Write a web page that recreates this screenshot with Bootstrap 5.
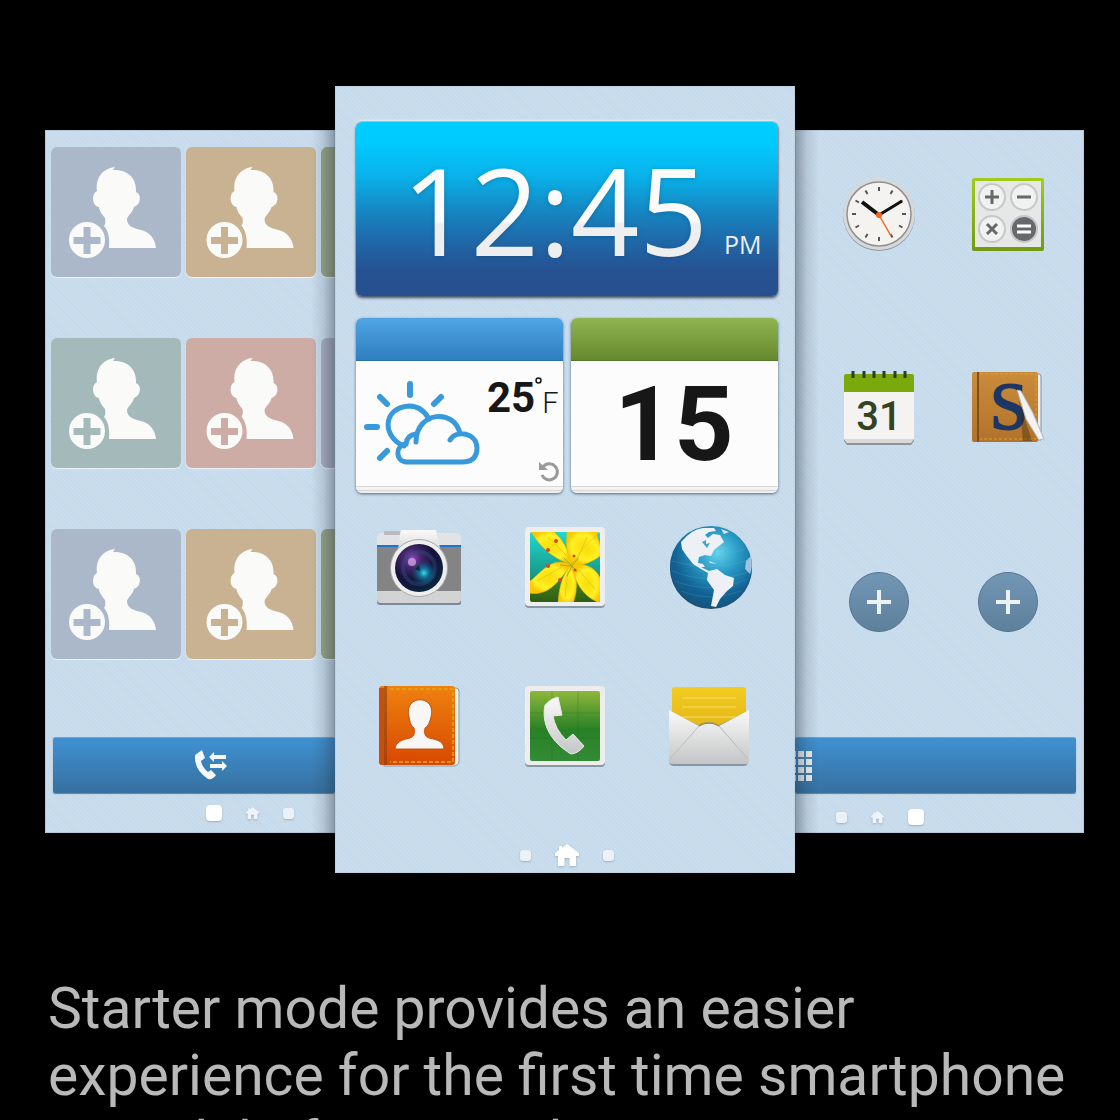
<!DOCTYPE html>
<html lang="en">
<head>
<meta charset="utf-8">
<meta name="viewport" content="width=device-width, initial-scale=1">
<title>Starter mode</title>
<link href="https://cdn.jsdelivr.net/npm/bootstrap@5.3.0/dist/css/bootstrap.min.css" rel="stylesheet">
<style>
body{background:#000;height:100vh;overflow:hidden;font-family:Roboto,"Noto Sans",sans-serif}
button,.app-link{background:none;border:0;padding:0;display:block;line-height:0}
svg{display:block;overflow:visible}
.previews{padding:86px 36px 0 45px}
.pane{background:repeating-linear-gradient(45deg,#c4d9eb 0 1px,#cadded 1px 3px);box-shadow:inset 0 0 0 1px #b5c8d8}
.side{flex:1 1 0;min-width:0;overflow:hidden;height:703px;margin-top:44px;position:relative}
.side::after{content:"";position:absolute;top:0;bottom:0;width:24px;pointer-events:none}
.left-pane::after{right:0;background:linear-gradient(to left,rgba(35,50,65,.4),rgba(35,50,65,.12) 50%,transparent)}
.right-pane::after{left:0;background:linear-gradient(to right,rgba(35,50,65,.4),rgba(35,50,65,.12) 50%,transparent)}
.main-pane{flex:0 0 460px;height:787px;z-index:2;padding:36px 17px 6px 21px;box-shadow:inset 0 0 0 1px #bfd2e2}
.tiles{display:grid;grid-template-columns:repeat(3,130px);gap:61px 5px;padding:17px 0 78px 6px}
.tile{height:130px;border-radius:6px;background:var(--c);box-shadow:0 1px 1px #edf3f7}
.bluebar{height:56px;background:linear-gradient(#4091d2,#36709f);border-top:1px solid #55aae8;border-radius:2px;box-shadow:0 1px 1px #778}
.left-pane .bluebar{padding-left:142px}
.left-pane .pager{padding-left:161px}
.right-pane .pager{padding-left:41px;margin-top:12px}
.clock-card{height:174px;border-radius:6px;background:linear-gradient(#00ceff 0,#00caff 12%,#0ab0e8 32%,#1589c4 50%,#1e6cac 66%,#265292 85%,#264f8d);box-shadow:0 2px 3px #44546a,0 0 0 1px #b4bfc6,0 -2px 2px #e4eff6}
.digits{font:500 120px/140px "Open Sans","Noto Sans",sans-serif;background:linear-gradient(#fbfbfb 58%,#eee 60%);-webkit-background-clip:text;background-clip:text;color:transparent;filter:drop-shadow(0 1px 2px rgba(0,50,90,.3))}
.meridiem{font:25px/32px "Open Sans","Noto Sans",sans-serif;color:#eee;padding-bottom:12px}
.widgets{margin-top:22px}
.widget{height:175px;border-radius:6px;overflow:hidden;background:linear-gradient(#fcfcfc 168px,#d9d9d9 168px 169px,#f3f3f3 169px 172px,#d5d5d5 172px 173px,#efefef 173px);box-shadow:0 1px 3px #53677a;color:#171717}
.widget header{height:43px}
.wx-head{background:linear-gradient(#4fa5e3,#2f7fc0);border-bottom:1px solid #2b6fac}
.day-head{background:linear-gradient(#91b451,#65892d);border-bottom:1px solid #55752a}
.temp{font-size:42px;line-height:42px;font-weight:700}
.unit{font-size:29px;line-height:36px;font-weight:300}
.day{font-size:104px;line-height:128px;font-weight:700}
.apps{display:grid;grid-template-columns:repeat(3,146px);row-gap:59px;margin:24px -14px 0 -10px}
.apps>*{height:100px;display:flex;align-items:center;justify-content:center}
.pager{height:24px}
.knob{width:11px;height:11px;border-radius:3px;background:#eaf1f7;box-shadow:0 1px 2px #9eb0c0}
.knob.active{width:16px;height:16px;border-radius:4px;background:#fff}
.home-ico{fill:#eef4f9;filter:drop-shadow(0 1px 1px #9eb0c0)}
.home-ico.active{fill:#fff}
.right-grid{display:grid;grid-template-columns:129px 129px;row-gap:94px;padding:34px 0 85px 20px}
.right-grid>*{height:100px;display:flex;align-items:center;justify-content:center}
.intro{font-size:57px;line-height:67px;color:#b9b9b9;padding:102px 36px 0 48px}
</style>
<script src="https://cdn.jsdelivr.net/npm/bootstrap@5.3.0/dist/js/bootstrap.bundle.min.js"></script>
</head>
<body>
<svg width="0" height="0" class="position-absolute" aria-hidden="true">
<defs>
<symbol id="contact" viewBox="0 0 130 130">
<path fill="#fafbf9" d="M46 44C44 29 54 21 64 20L62 23C76 22 86 31 85 45C91 47 90 58 83 60C82 65 77 68 76 72C76 79 82 81 90 83C99 85 104 92 105 101H58C59 91 57 83 53 79Q55 76 54 71Q48 64 48 60C41 59 40 47 46 44Z"/>
<circle cx="36" cy="93" r="18" fill="#fafbf9"/><path d="M32.500 80h7v10h10v7h-10v10h-7v-10h-10v-7h10z" fill="var(--c)"/>
</symbol>
<symbol id="house" viewBox="0 0 24 22"><path d="M12 0L24 9V12H21V22H14.500V14H9.500V22H3V12H0V9L4 6V2H7V4Z"/></symbol>
<linearGradient id="silver" x2="0" y2="1"><stop stop-color="#fafafa"/><stop offset="1" stop-color="#c4c5c6"/></linearGradient>
<linearGradient id="slate" x2="0" y2="1"><stop stop-color="#7297b5"/><stop offset="1" stop-color="#5d809b"/></linearGradient>
<radialGradient id="lens" cx=".35" cy=".3" r=".8"><stop stop-color="#9a45bd"/><stop offset=".25" stop-color="#42256a"/><stop offset=".55" stop-color="#15123a"/><stop offset="1" stop-color="#08293f"/></radialGradient>
<radialGradient id="glow"><stop stop-color="#39dbe7"/><stop offset=".35" stop-color="#128bac" stop-opacity=".8"/><stop offset="1" stop-color="#0b5c83" stop-opacity="0"/></radialGradient>
<radialGradient id="sea" cx=".58" cy=".32" r=".7"><stop stop-color="#64d5ec"/><stop offset=".35" stop-color="#2c9dc7"/><stop offset=".75" stop-color="#126295"/><stop offset="1" stop-color="#14547e"/></radialGradient>
<linearGradient id="teal" x2="0" y2="1"><stop stop-color="#20d8d2"/><stop offset=".6" stop-color="#189a88"/><stop offset=".8" stop-color="#3b7418"/><stop offset="1" stop-color="#2d5d15"/></linearGradient>
<radialGradient id="petal"><stop stop-color="#f6dd10"/><stop offset=".4" stop-color="#ffe714"/><stop offset=".7" stop-color="#fff02a"/><stop offset="1" stop-color="#fbc902"/></radialGradient>
<linearGradient id="orange" x2="0" y2="1"><stop stop-color="#ee810f"/><stop offset="1" stop-color="#d84800"/></linearGradient>
<linearGradient id="leaf" x2="0" y2="1"><stop stop-color="#8eb73b"/><stop offset=".55" stop-color="#298126"/><stop offset="1" stop-color="#328b35"/></linearGradient>
<linearGradient id="yellow" x2="0" y2="1"><stop stop-color="#f3cc22"/><stop offset="1" stop-color="#dfaf14"/></linearGradient>
<linearGradient id="tan" x2="0" y2="1"><stop stop-color="#ca8c3b"/><stop offset="1" stop-color="#b2722b"/></linearGradient>
<linearGradient id="lime" x2="0" y2="1"><stop stop-color="#a0cc1c"/><stop offset="1" stop-color="#719a12"/></linearGradient>
<clipPath id="frame"><rect x="5" y="5" width="70" height="70" rx="2"/></clipPath>
</defs>
</svg>

<main>
<div class="previews d-flex align-items-start">

<section class="pane side left-pane" aria-label="Contacts screen">
<div class="tiles">
<button class="tile" style="--c:#abb8ca" aria-label="Add contact"><svg width="130" height="130"><use href="#contact"/></svg></button>
<button class="tile" style="--c:#c8b292" aria-label="Add contact"><svg width="135" height="130"><use href="#contact"/></svg></button>
<button class="tile" style="--c:#97a487" aria-label="Add contact"></button>
<button class="tile" style="--c:#a4b9b9" aria-label="Add contact"><svg width="130" height="130"><use href="#contact"/></svg></button>
<button class="tile" style="--c:#cdaca6" aria-label="Add contact"><svg width="135" height="130"><use href="#contact"/></svg></button>
<button class="tile" style="--c:#a9aec4" aria-label="Add contact"></button>
<button class="tile" style="--c:#abb8ca" aria-label="Add contact"><svg width="130" height="130"><use href="#contact"/></svg></button>
<button class="tile" style="--c:#c8b292" aria-label="Add contact"><svg width="135" height="130"><use href="#contact"/></svg></button>
<button class="tile" style="--c:#97a487" aria-label="Add contact"></button>
</div>
<div class="ps-2"><button class="bluebar d-flex align-items-center w-100" aria-label="Call log"><svg width="34" height="32" viewBox="0 0 34 32" fill="#f5f7f8"><path d="M0 5L7 0L10 8L6 11Q7 17 13 22L16 20L21 25Q18 30 13 29Q-1 20 0 5Z"/><path d="M14 7L19 2V5H31V9H19V12ZM32 16L27 11V14H15V18H27V21Z"/></svg></button></div>
<div class="pager d-flex align-items-center gap-4 mt-2"><span class="knob active"></span><svg class="home-ico" width="13" height="12"><use href="#house"/></svg><span class="knob"></span></div>
</section>

<section class="pane main-pane d-flex flex-column position-relative" aria-label="Home screen">
<div class="clock-card d-flex align-items-end justify-content-end pe-3">
<span class="digits mb-3">12:45</span><span class="meridiem ms-3 mb-4">PM</span>
</div>
<div class="widgets row g-0 gap-2 flex-nowrap">
<div class="col widget">
<header class="wx-head"></header>
<div class="d-flex justify-content-between">
<svg class="mt-3 ms-2 mb-2" width="120" height="96" viewBox="0 0 120 96" fill="none" stroke="#3899db" stroke-width="5" stroke-linecap="round"><path stroke-width="6" d="M46 7V18M16 20L23 27M77 20L70 27M3 50H13M16 81L23 74"/><path d="M40 69C19 61 17 31 45 29Q58 29 65 42"/><path d="M52 65C52 34 91 31 96 57M86 63C92 52 113 56 113 71Q113 85 98 85H43C31 85 31 68 42 67Q43 58 52 57"/></svg>
<div class="d-flex flex-column align-items-end justify-content-between pt-3 pe-1">
<div class="d-flex align-items-start"><span class="temp">25</span><span class="unit d-flex"><svg width="7" height="7" viewBox="0 0 7 7"><circle cx="3.500" cy="3.500" r="2.500" fill="none" stroke="#171717" stroke-width="1.500"/></svg><span class="pt-2">F</span></span></div>
<button aria-label="Refresh"><svg width="20" height="20" viewBox="0 0 20 20"><path d="M4 6A8 8 0 1 1 3 14" fill="none" stroke="#999" stroke-width="3"/><path d="M0 1L9 9H0Z" fill="#999"/></svg></button>
</div></div>
</div>
<div class="col widget text-center"><header class="day-head"></header><div class="day">15</div></div>
</div>
<nav class="apps" aria-label="Apps">
<a class="app-link" href="#" aria-label="Camera"><svg width="86" height="76" viewBox="0 0 86 76"><path fill="#7c8b9b" d="M1 12H85V74Q85 76 82 76H4Q1 76 1 73Z"/><path d="M1 9Q1 4 6 4H80Q85 4 85 9V17H1Z" fill="#e2e3e4"/><rect x="8" y="2" width="16" height="4" rx="1" fill="#bbb"/><path fill="#848484" d="M1 17H85V63H1z"/><path fill="#1c73d0" d="M1 16H85V18H1z"/><path fill="#d2d3d3" d="M1 62H85V70Q85 74 81 74H5Q1 74 1 70Z"/><path fill="url(#silver)" d="M25 1H60L67 33H20Z"/><circle cx="43" cy="39" r="28.500" fill="#eee" stroke="#aaa"/><circle cx="43" cy="39" r="24" fill="url(#lens)"/><circle cx="43" cy="39" r="16" fill="none" stroke="#314c7a" opacity=".45" stroke-width="4"/><circle cx="48" cy="44" r="13" fill="url(#glow)"/><circle cx="36" cy="33" r="4" fill="#d7aeea" opacity=".7"/><path d="M43 36L39 40L44 42" fill="#082d33"/></svg></a>
<a class="app-link" href="#" aria-label="Gallery"><svg width="80" height="80" viewBox="0 0 80 80"><rect y="2" width="80" height="79" rx="4" fill="#8998a5"/><rect width="80" height="79" rx="4" fill="#eeeeef"/><g clip-path="url(#frame)"><path fill="url(#teal)" d="M5 5H75V75H5z"/><g fill="url(#petal)" stroke="#e9b800" stroke-width=".5"><path d="M47 38C31 32 17 24 5 3H27Q42 15 47 38Z"/><path d="M47 37C39 22 42 14 42 2H75Q64 25 47 37Z"/><path d="M47 38Q57 20 72 8L78 27Q62 40 47 38Z"/><path d="M46 38C27 28 17 45 4 55L3 66C25 70 35 52 46 38Z"/><path d="M46 38Q34 51 33 77H48Q56 54 46 38Z"/><path d="M47 37Q70 35 77 55V77Q51 68 47 37Z"/></g><path d="M50 38L62 10M51 40L70 62M43 43L40 70M40 38L12 54M43 30L23 10" stroke="#eacb17" fill="none"/><path d="M47 39L39 31M47 39L35 38M47 39L53 31M47 39L42 49M47 39L52 45" stroke="#a8a91b"/><g fill="#d8451b"><circle cx="23" cy="23" r="2"/><circle cx="31" cy="14" r="2"/><circle cx="23" cy="39" r="2"/><circle cx="35" cy="53" r="2"/><circle cx="49" cy="29" r="1.500"/><circle cx="50" cy="43" r="1.500"/></g></g></svg></a>
<a class="app-link" href="#" aria-label="Internet"><svg width="84" height="84" viewBox="0 0 84 84"><circle cx="42" cy="43" r="41" fill="#354a5c"/><circle cx="42" cy="42" r="41" fill="url(#sea)"/><path fill="none" stroke="#7ac6dc" opacity=".18" d="M3 36Q42 48 80 35M3 46Q40 61 82 46M6 56Q40 70 79 54M12 66Q40 78 72 66M30 26Q50 34 76 24"/><path fill="#edf1f5" d="M12 17Q23 4 34 3L45 3L47 6L40 7L36 10L39 13L44 9L51 10L55 17L50 21L45 25L42 31L36 30L30 32L29 38L34 39L36 42L32 42L40 46L48 44L56 50L65 53L64 61L58 66L51 74L47 82L42 81L45 65L38 55L39 48L32 44L24 39L17 30L13 24Z"/><path fill="#46a4c7" d="M33 17L37 15L37 19L41 18L38 23Z"/><path fill="#dce8f0" d="M52 4L60 7L55 9ZM40 36L48 39L41 38Z"/><path fill="#9fc3df" d="M82 31Q84 42 81 49L76 44L77 36Z"/></svg></a>
<a class="app-link" href="#" aria-label="Contacts"><svg width="80" height="80" viewBox="0 0 80 80"><path d="M70 2H77Q80 2 80 5V75Q80 80 74 80H5V76H71Z" fill="#f1f1ee" stroke="#8997a1"/><rect width="76" height="79" rx="3" fill="url(#orange)"/><path d="M0 2H5V77H0z" fill="#c94e0a"/><path d="M5 0H8V79H5z" fill="#873e1a" opacity=".6"/><path d="M11 3H74V76H11" fill="none" stroke="#dbaa14" stroke-width="1.500" stroke-dasharray="4 2"/><path d="M30 31C24 8 58 8 52 31Q50 40 46 42Q44 50 50 52C61 54 65 57 65 63H16C17 56 22 54 31 52Q37 50 35 42Q31 39 30 31Z" fill="#f8f7f5" stroke="#c15214"/></svg></a>
<a class="app-link" href="#" aria-label="Phone"><svg width="80" height="80" viewBox="0 0 80 80"><rect y="2" width="80" height="79" rx="4" fill="#8998a5"/><rect width="80" height="79" rx="4" fill="#ededee"/><rect x="5" y="5" width="70" height="70" rx="2" fill="url(#leaf)"/><path d="M27 5V75M53 5V75M5 27H75M5 52H75" stroke="#185e20" opacity=".25"/><path d="M20 19Q26 12 33 11L37 29L28 30Q30 43 41 54L48 48L59 60Q54 67 46 68C26 56 16 38 20 19Z" fill="url(#silver)" stroke="#e8ece8"/></svg></a>
<a class="app-link" href="#" aria-label="Messages"><svg class="me-1" width="80" height="80" viewBox="0 0 80 80"><rect x="3" y="1" width="74" height="55" rx="3" fill="url(#yellow)"/><path d="M13 12H67M13 21H67M13 31H67" stroke="#f9dd65"/><path d="M1 25L29 39Q40 33 50 39L79 25V75Q79 80 75 80H5Q0 80 0 75Z" fill="#8796a2"/><path d="M0 24L30 40Q40 34 50 40L80 24V75Q80 78 77 78H3Q0 78 0 75Z" fill="url(#silver)"/><path d="M1 73L30 40Q40 34 50 40L79 73" fill="none" stroke="#bbb"/><path d="M30 40Q40 34 50 40" fill="none" stroke="#a87d0e"/></svg></a>
</nav>
<div class="pager d-flex align-items-center justify-content-center gap-4 mt-auto"><span class="knob"></span><svg class="home-ico active" width="24" height="22"><use href="#house"/></svg><span class="knob"></span></div>
</section>

<section class="pane side right-pane" aria-label="Apps screen">
<div class="right-grid">
<a class="app-link" href="#" aria-label="Clock"><svg width="74" height="74" viewBox="0 0 74 74"><circle cx="37" cy="38" r="36" fill="#8997a3"/><circle cx="37" cy="37" r="36" fill="#d7d8d9"/><circle cx="37" cy="37" r="32" fill="#f5f3ef" stroke="#8f9193" stroke-width="1.500"/><path stroke="#555" stroke-width="2" d="M37 10V14M37 60V64M10 37H14M60 37H64M23.500 13.500L25.500 17M48.500 57L50.500 60.500M50.500 13.500L48.500 17M25.500 57L23.500 60.500M13.500 23.500L17 25.500M57 48.500L60.500 50.500M13.500 50.500L17 48.500M60.500 23.500L57 25.500"/><path d="M37 38L20 25" stroke="#111" stroke-width="4"/><path d="M37 38L60 24" stroke="#111" stroke-width="3"/><path d="M37 38L49 59" stroke="#f6651d" stroke-width="1.500"/><circle cx="37" cy="38" r="3" fill="#f6651d"/></svg></a>
<a class="app-link" href="#" aria-label="Calculator"><svg width="72" height="72" viewBox="0 0 72 72"><rect width="72" height="73" rx="2" fill="url(#lime)"/><path fill="#e6e8e8" d="M3 3H69V69H3z"/><g fill="#f1f1f1" stroke="#c6c8c8" stroke-width="2"><circle cx="20" cy="19" r="13"/><circle cx="52" cy="19" r="13"/><circle cx="20" cy="51" r="13"/><circle cx="52" cy="51" r="13" fill="#65696b"/></g><path d="M20 12V26M13 19H27M45 19H59M15 46L25 56M25 46L15 56" stroke="#65696b" stroke-width="3"/><path d="M45 48H59M45 54H59" stroke="#fff" stroke-width="3"/></svg></a>
<a class="app-link" href="#" aria-label="Calendar"><svg width="70" height="74" viewBox="0 0 70 74"><path d="M0 6H70V70L67 74H3L0 70Z" fill="#8e9499"/><path d="M0 5H70V68L67 71H3L0 68Z" fill="#f4f3f1"/><path d="M0 68L3 72H67L70 68" fill="#d8d8d8"/><path d="M0 5Q0 3 2 3H68Q70 3 70 5V21H0Z" fill="#79a90b"/><path d="M9 0V7M20 0V7M30 0V7M40 0V7M51 0V7M61 0V7" stroke="#303a2a" stroke-width="3"/><text x="35" y="59" text-anchor="middle" font-family="Roboto,sans-serif" font-size="40" font-weight="500" fill="#35441f">31</text></svg></a>
<a class="app-link" href="#" aria-label="S Note"><svg width="72" height="72" viewBox="0 0 72 72"><path d="M60 2H67Q69 2 69 5V68H55" fill="#eee" stroke="#8592a0"/><rect width="66" height="70" rx="2" fill="url(#tan)"/><path d="M5 0H7V70H5z" fill="#79501f"/><path d="M8 2H64V67H8" fill="none" stroke="#dda02c" stroke-dasharray="3 2"/><text x="37" y="57" text-anchor="middle" font-family="Liberation Serif,serif" font-size="68" fill="#1d3764" stroke="#1d3764" stroke-width="2">S</text><path d="M47 28L60 69H51Z" fill="#3b2810" opacity=".4"/><path d="M45 18L49 19L61 41L72 67L67 68L54 47Z" fill="#f2f2f2" stroke="#b4b5b8"/></svg></a>
<button aria-label="Add app"><svg width="60" height="60" viewBox="0 0 60 60"><circle cx="30" cy="30" r="29.500" fill="url(#slate)" stroke="#55758d"/><path d="M28 18H32V28H42V32H32V42H28V32H18V28H28Z" fill="#edf1f2"/></svg></button>
<button aria-label="Add app"><svg width="60" height="60" viewBox="0 0 60 60"><circle cx="30" cy="30" r="29.500" fill="url(#slate)" stroke="#55758d"/><path d="M28 18H32V28H42V32H32V42H28V32H18V28H28Z" fill="#edf1f2"/></svg></button>
</div>
<div class="pe-2"><button class="bluebar d-block w-100" aria-label="All apps"><svg width="17" height="30" viewBox="0 0 17 30"><path fill="#f0f0f0" d="M0 0H1V6H0zM3 0H9V6H3zM11 0H17V6H11zM0 8H1V14H0zM3 8H9V14H3zM11 8H17V14H11zM0 16H1V22H0zM3 16H9V22H3zM11 16H17V22H11zM0 24H1V30H0zM3 24H9V30H3zM11 24H17V30H11z"/></svg></button></div>
<div class="pager d-flex align-items-center gap-4"><span class="knob"></span><svg class="home-ico" width="13" height="12"><use href="#house"/></svg><span class="knob active"></span></div>
</section>
</div>
<p class="intro mb-0">Starter mode provides an easier experience for the first time smartphone a model of ease and</p>
</main>
</body>
</html>
